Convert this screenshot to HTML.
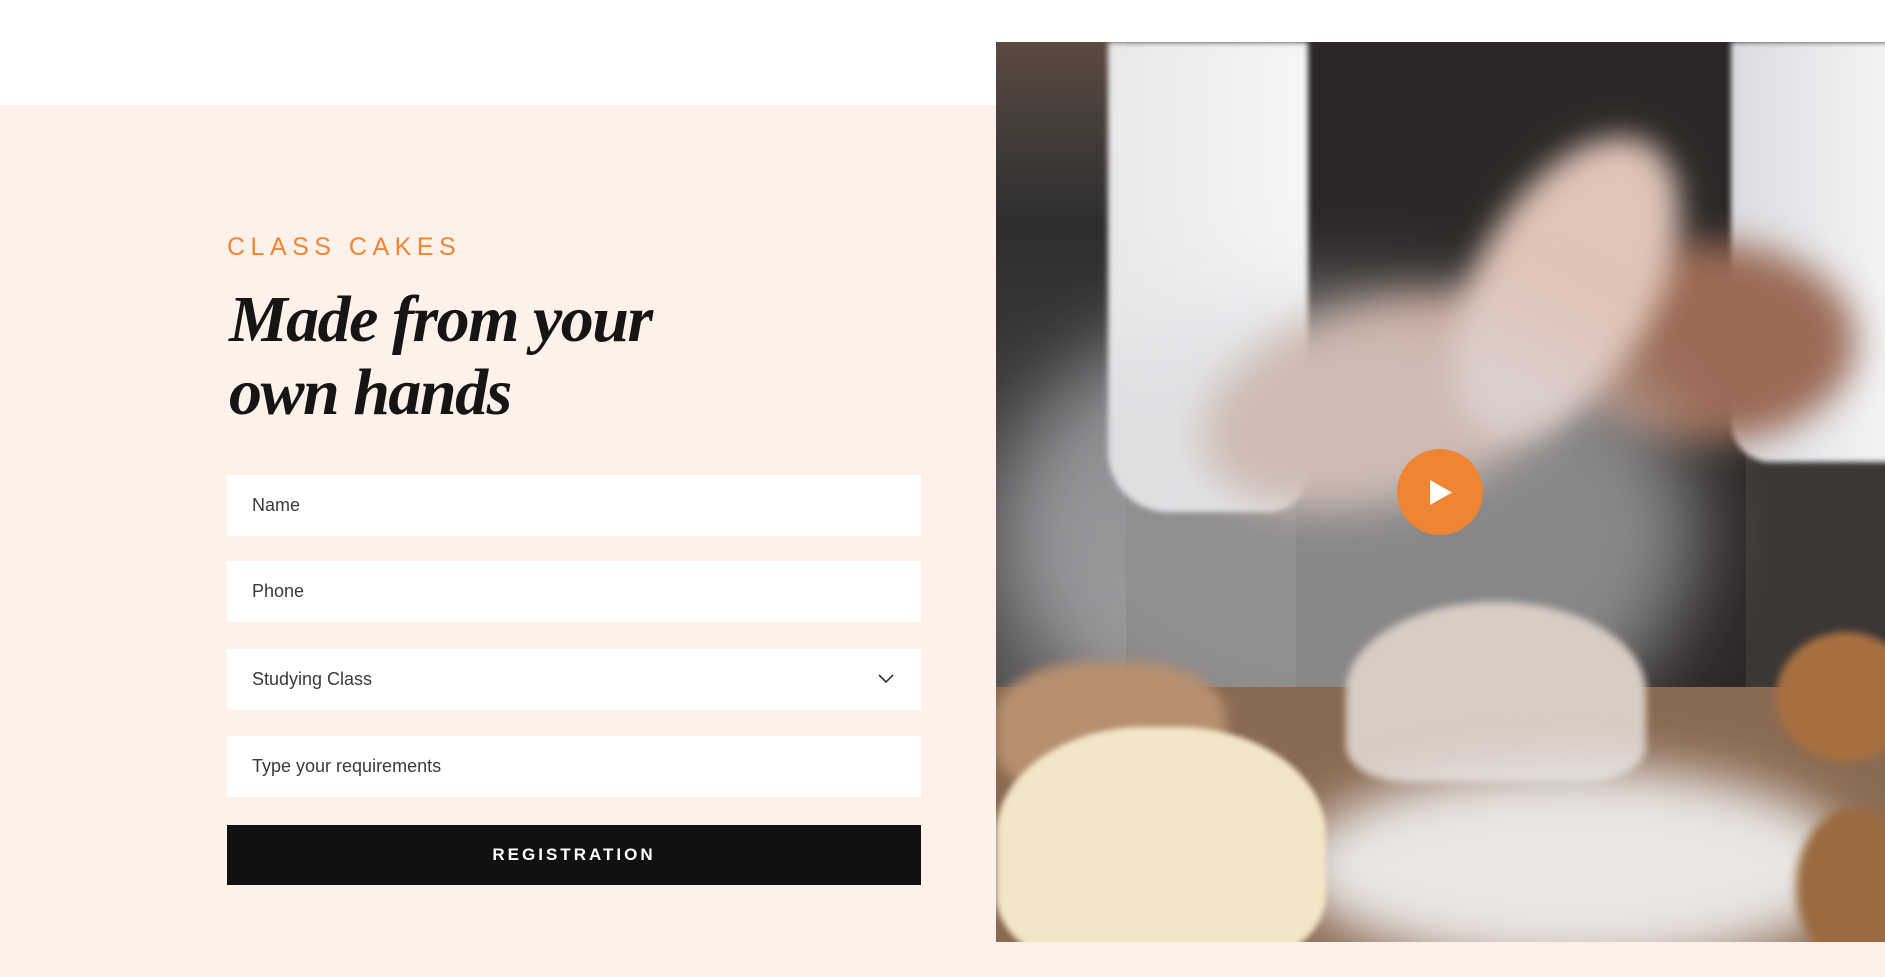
<!DOCTYPE html>
<html><head><meta charset="utf-8"><style>
*{margin:0;padding:0;box-sizing:border-box}
body{width:1885px;height:977px;background:#fff;position:relative;overflow:hidden;font-family:"Liberation Sans",sans-serif}
.beige{position:absolute;left:0;top:105px;width:1885px;height:872px;background:#fdf1e9}
.tag{position:absolute;left:227px;top:233px;font-size:25px;letter-spacing:5.5px;color:#ee8533;font-weight:500}
h1{position:absolute;left:229px;top:283px;font-family:"Liberation Serif",serif;font-style:italic;font-weight:bold;font-size:66px;line-height:73px;color:#151515;letter-spacing:-1.5px}
.f{position:absolute;left:227px;width:694px;height:61px;background:#fff;font-size:18px;color:#3a3a3a;padding-left:25px;line-height:61px}
.btn{position:absolute;left:227px;top:825px;width:694px;height:60px;background:#111;color:#fff;font-size:17px;font-weight:bold;letter-spacing:3px;text-align:center;line-height:60px}
.img{position:absolute;left:996px;top:42px;width:889px;height:900px;overflow:hidden;background:#3b3735}
.img div{position:absolute}
</style></head><body>
<div class="beige"></div>
<div class="tag">CLASS CAKES</div>
<h1>Made from your<br>own hands</h1>
<div class="f" style="top:475px">Name</div>
<div class="f" style="top:561px">Phone</div>
<div class="f" style="top:649px">Studying Class
<svg style="position:absolute;left:651px;top:24px" width="16" height="12" viewBox="0 0 16 12"><path d="M1 2l7 7 7-7" fill="none" stroke="#333" stroke-width="1.6"/></svg></div>
<div class="f" style="top:736px">Type your requirements</div>
<div class="btn">REGISTRATION</div>
<div class="img">
 <div style="left:0;top:0;width:130px;height:909px;background:linear-gradient(#5a4a40,#2e2e30 20%,#4a4a4c 60%,#6a6462)"></div>
 <div style="left:300px;top:0;width:450px;height:720px;background:#2b2827"></div>
 <div style="left:112px;top:0;width:200px;height:470px;background:linear-gradient(90deg,#e8e8ea,#f6f6f8);border-radius:0 0 40px 60px;filter:blur(3px)"></div>
 <div style="left:735px;top:0;width:160px;height:420px;background:linear-gradient(90deg,#dcdce0,#f4f4f6);border-radius:0 0 0 40px;filter:blur(3px)"></div>
 <div style="left:200px;top:260px;width:380px;height:200px;background:#c39a85;border-radius:50%;filter:blur(20px);transform:rotate(-15deg)"></div>
 <div style="left:560px;top:200px;width:300px;height:200px;background:#9a6a55;border-radius:50%;filter:blur(18px)"></div>
 <div style="left:480px;top:80px;width:180px;height:330px;background:#e0c4b8;border-radius:50%;filter:blur(15px);transform:rotate(30deg)"></div>
 <div style="left:0;top:250px;width:700px;height:480px;background:rgba(215,215,218,.55);border-radius:50%;filter:blur(40px)"></div>
 <div style="left:0;top:645px;width:889px;height:260px;background:#8a6a52"></div>
 <div style="left:350px;top:560px;width:300px;height:180px;background:#d8ccc4;border-radius:50% 50% 20% 20%;filter:blur(4px)"></div>
 <div style="left:0;top:620px;width:230px;height:140px;background:#b89070;border-radius:40%;filter:blur(6px)"></div>
 <div style="left:780px;top:590px;width:140px;height:130px;background:#a87040;border-radius:50%;filter:blur(4px)"></div>
 <div style="left:300px;top:725px;width:560px;height:200px;background:#eae6e4;border-radius:50%;filter:blur(25px)"></div>
 <div style="left:0;top:685px;width:330px;height:240px;background:#f2e6c8;border-radius:45% 45% 30% 30%;filter:blur(3px)"></div>
 <div style="left:800px;top:765px;width:120px;height:160px;background:#9a6a40;border-radius:50%;filter:blur(5px)"></div>
</div>
<div style="position:absolute;left:1397px;top:449px;width:86px;height:86px;border-radius:50%;background:#ee8533"></div>
<svg style="position:absolute;left:1428px;top:479px" width="26" height="27" viewBox="0 0 26 27"><path d="M2 1L24 13.5 2 26z" fill="#fff"/></svg>
</body></html>
